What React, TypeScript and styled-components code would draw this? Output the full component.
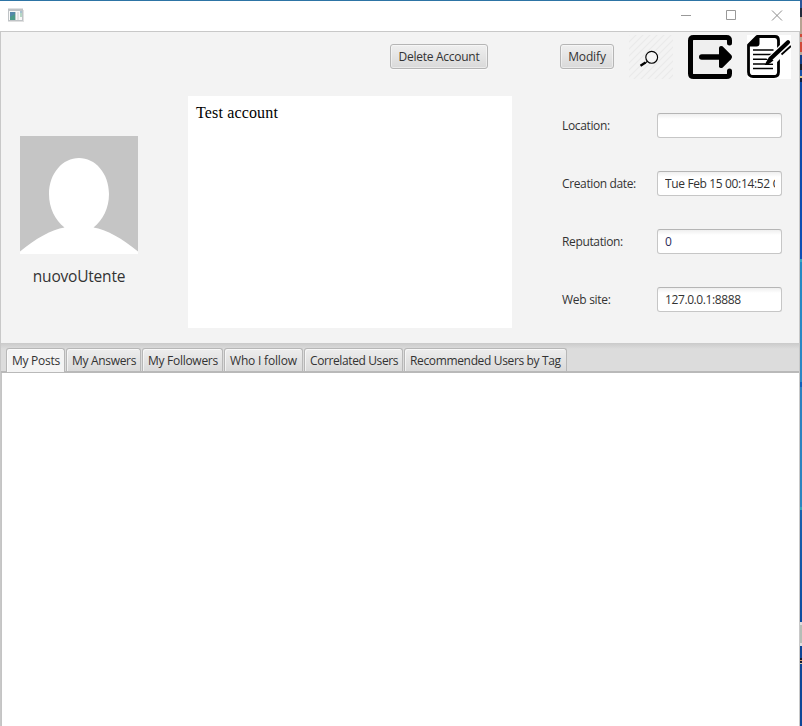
import React from "react";
import styled, { createGlobalStyle } from "styled-components";

const GlobalStyle = createGlobalStyle`
  *, *::before, *::after { box-sizing: border-box; }
  html, body { margin: 0; height: 726px; overflow: hidden; }
  body { font: 12px/16px "Open Sans", "Noto Sans", sans-serif; color: #333; }
`;

const Desktop = styled.div`
  display: flex;
  width: 802px;
  height: 726px;
`;

const Backdrop = styled.div`
  width: 2px;
  background: linear-gradient(
    #2a5699 0 8px, #222b3c 8px 17px, #b5a292 17px 34px, #cf4a39 34px 37px,
    #b9a798 37px 42px, #cf4a39 42px 52px, #b9a798 52px 55px, #123f8a 55px 64px,
    #17202f 64px 70px, #1551a8 70px 76px, #d6c48c 76px 78px, #10203e 78px 82px,
    #0b47a4 82px 90px, #0c4fb5 259px, #35a8c4 259px 262px, #2389c3 262px,
    #2b86c5 382px, #1160bb 382px 387px, #2b80c0 387px, #2b84bf 507px,
    #31a6bd 507px 510px, #1860ad 510px, #0c4c9f 622px, #ddd 622px 625px,
    #b4bdb6 625px 643px, #ddd 643px 646px, #0d4595 646px 658px,
    #111b31 658px 660px, #cf9862 660px 661px, #111b31 661px 663px,
    #cfcbb0 663px 664px, #0d4797 664px);
`;

const Window = styled.main`
  width: 800px;
  display: flex;
  flex-direction: column;
  border-top: 1px solid #2d74a5;
  background: #fff;
`;

const TitleBar = styled.header`
  height: 30px;
  flex: none;
  display: flex;
  align-items: flex-start;
  justify-content: space-between;
  padding: 7px 16px 0 8px;
  svg { display: block; }
`;

const Client = styled.div`
  flex: 1;
  display: flex;
  flex-direction: column;
  border: solid #c8c8c8;
  border-width: 1px 1px 0;
`;

const Profile = styled.section`
  height: 311px;
  flex: none;
  background: #f3f3f3;
`;

const Toolbar = styled.div`
  height: 64px;
  display: flex;
  align-items: flex-start;
  padding: 3px 8px 0 389px;
  svg { display: block; flex: none; }
`;

const PushButton = styled.button<{ $width: number; $gap: number; $track: number }>`
  width: ${(p) => p.$width}px;
  height: 25px;
  flex: none;
  margin: 9px ${(p) => p.$gap}px 0 0;
  padding: 1px 0 0;
  border: 1px solid #b5b5b5;
  border-radius: 3px;
  background: linear-gradient(#efefef, #d9d9d9);
  box-shadow: inset 0 0 0 1px rgba(255, 255, 255, 0.45), 0 1px 0 #fafafa;
  color: #333;
  font: inherit;
  letter-spacing: ${(p) => p.$track}px;
  white-space: nowrap;
`;

const IconSlot = styled.span<{ $gap?: number }>`
  width: 44px;
  height: 44px;
  flex: none;
  margin-right: ${(p) => p.$gap ?? 0}px;
`;

const Details = styled.div`
  display: grid;
  grid-template-columns: 187px 324px 220px;
`;

const Identity = styled.div`
  display: flex;
  flex-direction: column;
  align-items: center;
  width: 118px;
  margin: 40px 0 0 19px;
`;

const UserName = styled.div`
  margin-top: 11px;
  font-size: 15.5px;
  line-height: 22px;
  letter-spacing: -0.2px;
`;

const Bio = styled.div`
  height: 232px;
  padding: 7px 8px;
  background: #fff;
  color: #000;
  font: 16px/19px "Liberation Serif", serif;
  letter-spacing: 0.15px;
`;

const Form = styled.div`
  display: grid;
  grid-auto-rows: 25px;
  row-gap: 33px;
  padding: 17px 0 0 50px;
`;

const Field = styled.label`
  display: grid;
  grid-template-columns: 95px 125px;
  align-items: center;
`;

const Caption = styled.span<{ $track: number }>`
  letter-spacing: ${(p) => p.$track}px;
  white-space: nowrap;
`;

const Value = styled.span<{ $track: number; $navy?: boolean }>`
  height: 25px;
  padding: 0 6px 0 7px;
  border: 1px solid #c6c6c6;
  border-top-color: #b5b5b5;
  border-radius: 3px;
  background: linear-gradient(#efefef, #fff 5px);
  color: ${(p) => (p.$navy ? "#2d2d5c" : "#333")};
  line-height: 23px;
  letter-spacing: ${(p) => p.$track}px;
  white-space: nowrap;
  display: flex;
`;

const Clip = styled.span`
  overflow: hidden;
`;

const TabStrip = styled.nav`
  height: 30px;
  flex: none;
  display: flex;
  align-items: flex-end;
  gap: 1px;
  padding-left: 5px;
  border-bottom: 2px solid #b9b9b9;
  background: linear-gradient(#cacaca, #dcdcdc 6px);
`;

const Tab = styled.button<{ $width: number; $track: number; $active?: boolean }>`
  width: ${(p) => p.$width}px;
  height: ${(p) => (p.$active ? 24 : 23)}px;
  margin-bottom: ${(p) => (p.$active ? -1 : 0)}px;
  padding: 2px 0 ${(p) => (p.$active ? 1 : 0)}px 5px;
  border: 1px solid #b7b7b7;
  border-bottom: 0;
  border-radius: 3px 3px 0 0;
  background: ${(p) => (p.$active ? "#f4f4f4" : "linear-gradient(#ededed, #dadada)")};
  box-shadow: inset 1px 1px 0 rgba(255, 255, 255, 0.6);
  color: #333;
  font: inherit;
  letter-spacing: ${(p) => p.$track}px;
  text-align: left;
  white-space: nowrap;
`;

const TabContent = styled.section`
  flex: 1;
  border-left: 1px solid #c4c4c4;
  background: #fff;
`;

const AppIcon = () => (
  <svg width="16" height="15" viewBox="0 0 16 15">
    <path d="M0 .5h15v13H0z" fill="#bfc3c6" />
    <path d="M1 3h13v9H1z" fill="#f8f8f8" />
    <path d="M2 4h5v8H2z" fill="#4c9a89" />
    <path d="M2 4h5v2L2 9z" fill="#5589aa" />
    <path d="M7 4h1v8H7z" fill="#bbcac8" />
    <path d="M9 4h2v8H9z" fill="#e3e3e3" />
    <path d="M12 3h2v2h-2z" fill="#a5c1cf" />
    <path d="M12 5h2v4h-2z" fill="#b6d7c5" />
    <path d="M15 2h1v12H1v-1h14z" fill="#e0e0e0" />
  </svg>
);

const WindowControls = () => (
  <svg width="104" height="16" viewBox="0 0 104 16" fill="none" stroke="#999">
    <path d="M1 7.5h10M46.500 2.500h9v9h-9z" />
    <path d="M92 2.500l10 10M102 2.500l-10 10" stroke="#8c8c8c" />
  </svg>
);

const SearchIcon = () => (
  <svg width="44" height="44" viewBox="0 0 44 44">
    <defs>
      <pattern id="hatch" width="7" height="7" patternUnits="userSpaceOnUse">
        <path d="M-1 1L1-1M0 7L7 0M6 8L8 6" stroke="#eaeaea" strokeWidth="1.100" />
      </pattern>
    </defs>
    <path d="M0 0h44v44H0z" fill="#f3f3f3" />
    <path d="M0 0h44v44H0z" fill="url(#hatch)" />
    <circle cx="22.700" cy="22.300" r="5.900" fill="#f5f5f5" stroke="#000" strokeWidth="1.150" />
    <path d="M18.200 26.300l-2 2" stroke="#000" strokeWidth="1.200" />
    <path d="M16.500 27.500l-5 3.300" stroke="#000" strokeWidth="2.300" />
  </svg>
);

const LogoutIcon = () => (
  <svg width="44" height="44" viewBox="0 0 44 44">
    <path d="M5 5h34v34H5z" fill="#efefef" />
    <path d="M41.500 8V5.500q0-3-3-3h-33q-3 0-3 3v33q0 3 3 3h33q3 0 3-3V36" fill="none" stroke="#000" strokeWidth="5" strokeLinecap="round" />
    <path d="M13.800 22h20" stroke="#000" strokeWidth="5.600" strokeLinecap="round" />
    <path d="M31 12.500q.5-2.200 3.500-1.300l8.500 8.600q2 2.200 0 4.400l-8.500 8.600q-3 .9-3.500-1.300z" fill="#000" />
  </svg>
);

const EditIcon = () => (
  <svg width="44" height="44" viewBox="0 0 44 44">
    <path d="M0 0h44v44H0z" fill="#fff" />
    <path d="M10 1.500h18q3.500 0 3.500 4V37q0 4.500-4.500 4.500H6q-4.500 0-4.500-4.500V10z" fill="#fff" stroke="#000" strokeWidth="2.800" strokeLinejoin="round" />
    <path d="M1 10L10 1h2.500v7.500q0 3-3 3H1z" />
    <path d="M6 15h20.500M6 19.500h19M6 24.200h15M6 29h12M6 33.500h20" stroke="#000" strokeWidth="1.600" />
    <path d="M23 27L39 11" stroke="#fff" strokeWidth="10" />
    <path d="M24.500 22.800L41 7.200" stroke="#000" strokeWidth="4.200" strokeLinecap="round" />
    <path d="M22.300 21.500l4.200 4-5 3.700-4 .8z" />
    <path d="M34.500 19.500L44 11" stroke="#000" strokeWidth="1.800" />
    <path d="M18 29.300h8" fill="none" stroke="#000" strokeWidth="1.400" />
  </svg>
);

const Avatar = () => (
  <svg width="118" height="118" viewBox="0 0 118 118">
    <path d="M0 0h118v118H0z" fill="#c5c5c5" />
    <path d="M59 22C75 22 89 37 89 58C89 72 83 84 73.500 91.500C86 93 103 103 118 115.500V118H0V115.500C15 103 32 93 44.500 91.500C35 84 29 72 29 58C29 37 43 22 59 22Z" fill="#fff" />
  </svg>
);

const fields = [
  { caption: "Location:", value: "", track: -0.35, valueTrack: 0 },
  { caption: "Creation date:", value: "Tue Feb 15 00:14:52 CET 2022", track: -0.37, valueTrack: -0.36 },
  { caption: "Reputation:", value: "0", track: -0.36, valueTrack: 0, navy: true },
  { caption: "Web site:", value: "127.0.0.1:8888", track: -0.28, valueTrack: -0.4 },
];

const tabs = [
  { label: "My Posts", width: 59, track: -0.28 },
  { label: "My Answers", width: 75, track: -0.32 },
  { label: "My Followers", width: 81, track: -0.28 },
  { label: "Who I follow", width: 79, track: -0.19 },
  { label: "Correlated Users", width: 99, track: -0.39 },
  { label: "Recommended Users by Tag", width: 163, track: -0.35 },
];

export default function App() {
  return (
    <Desktop>
      <GlobalStyle />
      <Window>
        <TitleBar>
          <AppIcon />
          <WindowControls />
        </TitleBar>
        <Client>
          <Profile>
            <Toolbar>
              <PushButton $width={98} $gap={72} $track={-0.26}>Delete Account</PushButton>
              <PushButton $width={54} $gap={15} $track={-0.15}>Modify</PushButton>
              <IconSlot $gap={15}><SearchIcon /></IconSlot>
              <IconSlot $gap={15}><LogoutIcon /></IconSlot>
              <IconSlot><EditIcon /></IconSlot>
            </Toolbar>
            <Details>
              <Identity>
                <Avatar />
                <UserName>nuovoUtente</UserName>
              </Identity>
              <Bio>Test account</Bio>
              <Form>
                {fields.map((f) => (
                  <Field key={f.caption}>
                    <Caption $track={f.track}>{f.caption}</Caption>
                    <Value $track={f.valueTrack} $navy={f.navy}><Clip>{f.value}</Clip></Value>
                  </Field>
                ))}
              </Form>
            </Details>
          </Profile>
          <TabStrip>
            {tabs.map((t, i) => (
              <Tab key={t.label} $width={t.width} $track={t.track} $active={i === 0}>{t.label}</Tab>
            ))}
          </TabStrip>
          <TabContent />
        </Client>
      </Window>
      <Backdrop />
    </Desktop>
  );
}
